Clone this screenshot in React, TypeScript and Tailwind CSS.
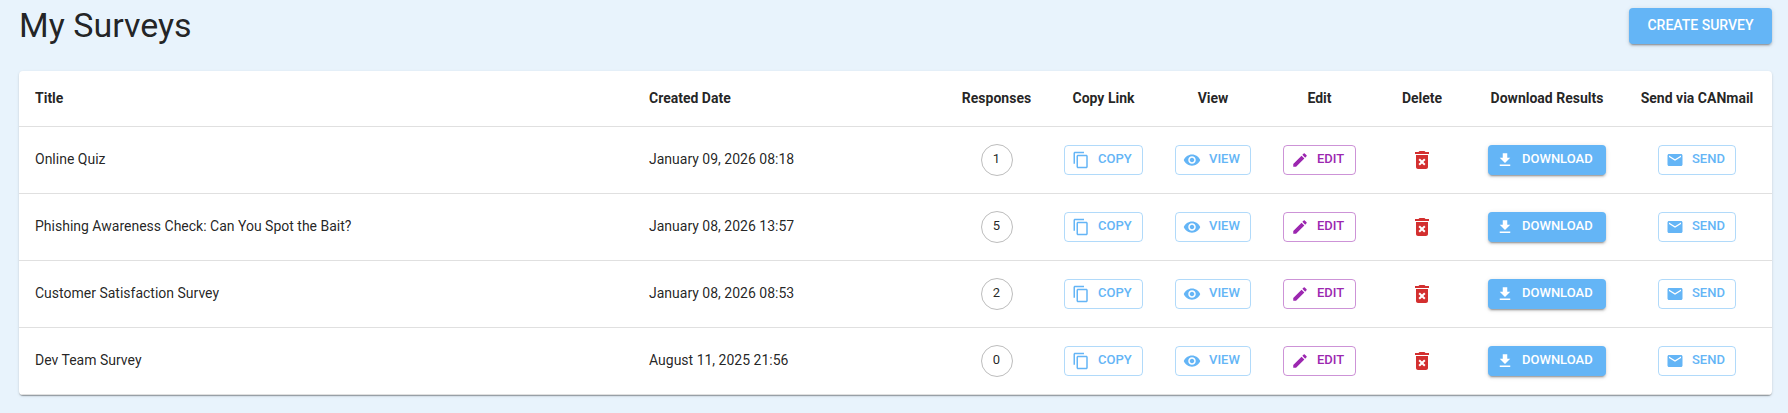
import React from 'react';
import {
  MdContentCopy,
  MdDeleteForever,
  MdEdit,
  MdEmail,
  MdFileDownload,
  MdVisibility,
} from 'react-icons/md';

interface Survey {
  title: string;
  created: string;
  responses: number;
}

const surveys: Survey[] = [
  { title: 'Online Quiz', created: 'January 09, 2026 08:18', responses: 1 },
  { title: 'Phishing Awareness Check: Can You Spot the Bait?', created: 'January 08, 2026 13:57', responses: 5 },
  { title: 'Customer Satisfaction Survey', created: 'January 08, 2026 08:53', responses: 2 },
  { title: 'Dev Team Survey', created: 'August 11, 2025 21:56', responses: 0 },
];

const raised =
  'bg-[#64b5f6] text-white shadow-[0px_3px_1px_-2px_rgba(0,0,0,0.2),0px_2px_2px_0px_rgba(0,0,0,0.14),0px_1px_5px_0px_rgba(0,0,0,0.12)]';

interface ActionButtonProps {
  icon: React.ReactNode;
  label: string;
  className: string;
}

const ActionButton: React.FC<ActionButtonProps> = ({ icon, label, className }) => (
  <button
    type="button"
    className={`inline-flex h-[30px] items-center gap-2 rounded pl-[7px] align-middle text-[13px] font-medium uppercase ${className}`}
  >
    {icon}
    {label}
  </button>
);

const SurveyRow: React.FC<{ survey: Survey }> = ({ survey }) => (
  <tr className="h-[67px] border-b border-[#e0e0e0]">
    <td className="px-4 pb-0.5">{survey.title}</td>
    <td className="px-4 pb-0.5">{survey.created}</td>
    <td className="text-center">
      <span className="inline-flex size-8 items-center justify-center rounded-full border border-[#bdbdbd] align-middle text-[13px]">
        {survey.responses}
      </span>
    </td>
    <td className="text-center">
      <ActionButton
        icon={<MdContentCopy size={18} />}
        label="Copy"
        className="w-[79px] border border-[#64b5f6]/50 text-[#64b5f6]"
      />
    </td>
    <td className="text-center">
      <ActionButton
        icon={<MdVisibility size={18} />}
        label="View"
        className="w-[76px] border border-[#64b5f6]/50 text-[#64b5f6]"
      />
    </td>
    <td className="text-center">
      <ActionButton
        icon={<MdEdit size={18} />}
        label="Edit"
        className="w-[73px] border border-[#9c27b0]/50 text-[#9c27b0]"
      />
    </td>
    <td className="text-center">
      <button type="button" aria-label={`Delete ${survey.title}`} className="inline-flex p-2 align-middle text-[#d32f2f]">
        <MdDeleteForever size={24} />
      </button>
    </td>
    <td className="text-center">
      <ActionButton
        icon={<MdFileDownload size={18} />}
        label="Download"
        className={`w-[118px] border border-transparent ${raised}`}
      />
    </td>
    <td className="text-center">
      <ActionButton
        icon={<MdEmail size={18} />}
        label="Send"
        className="w-[78px] border border-[#64b5f6]/50 text-[#64b5f6]"
      />
    </td>
  </tr>
);

export default function App() {
  return (
    <main className="min-h-screen bg-[#e8f3fc] pt-2 pr-4 pb-3 pl-[19px] font-[Roboto,sans-serif] text-sm text-black/87">
      <header className="flex items-start justify-between">
        <h1 className="text-[34px] leading-[34px]">My Surveys</h1>
        <button type="button" className={`h-9 w-[143px] rounded pb-0.5 text-sm font-medium uppercase ${raised}`}>
          Create Survey
        </button>
      </header>

      <div className="mt-[27px] overflow-x-auto rounded bg-white shadow-[0px_2px_1px_-1px_rgba(0,0,0,0.2),0px_1px_1px_0px_rgba(0,0,0,0.14),0px_1px_3px_0px_rgba(0,0,0,0.12)]">
        <table className="w-full min-w-[1400px] table-fixed border-collapse">
          <colgroup>
            <col />
            <col className="w-[312px]" />
            <col className="w-[103px]" />
            <col className="w-[111px]" />
            <col className="w-[108px]" />
            <col className="w-[105px]" />
            <col className="w-[100px]" />
            <col className="w-[150px]" />
            <col className="w-[150px]" />
          </colgroup>
          <thead>
            <tr className="h-[55px] border-b border-[#e0e0e0] [&>th]:font-bold">
              <th className="px-4 text-left">Title</th>
              <th className="px-4 text-left">Created Date</th>
              <th>Responses</th>
              <th>Copy Link</th>
              <th>View</th>
              <th>Edit</th>
              <th>Delete</th>
              <th>Download Results</th>
              <th>Send via CANmail</th>
            </tr>
          </thead>
          <tbody>
            {surveys.map((survey) => (
              <SurveyRow key={survey.title} survey={survey} />
            ))}
          </tbody>
        </table>
      </div>
    </main>
  );
}
